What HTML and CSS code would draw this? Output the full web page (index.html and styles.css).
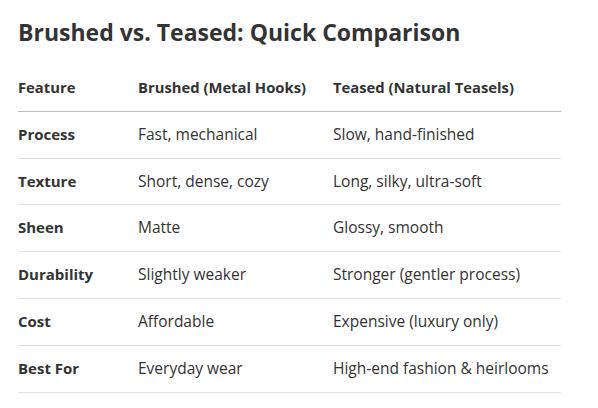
FILE: index.html
```html
<!DOCTYPE html>
<html>
<head>
<meta charset="utf-8">
<link rel="stylesheet" href="styles.css">
</head>
<body>
<div class="page">
  <h1 class="title">Brushed vs. Teased: Quick Comparison</h1>
  <table class="cmp">
    <thead>
      <tr><th class="c1">Feature</th><th class="c2">Brushed (Metal Hooks)</th><th class="c3">Teased (Natural Teasels)</th></tr>
    </thead>
    <tbody>
      <tr><td class="feat">Process</td><td>Fast, mechanical</td><td>Slow, hand-finished</td></tr>
      <tr><td class="feat">Texture</td><td>Short, dense, cozy</td><td>Long, silky, ultra-soft</td></tr>
      <tr><td class="feat">Sheen</td><td>Matte</td><td>Glossy, smooth</td></tr>
      <tr><td class="feat">Durability</td><td>Slightly weaker</td><td>Stronger (gentler process)</td></tr>
      <tr><td class="feat">Cost</td><td>Affordable</td><td>Expensive (luxury only)</td></tr>
      <tr><td class="feat">Best For</td><td>Everyday wear</td><td>High-end fashion &amp; heirlooms</td></tr>
    </tbody>
  </table>
</div>
</body>
</html>
```
FILE: styles.css
```css
html, body { margin: 0; padding: 0; background: #fff; }
body { font-family: "Open Sans", "Noto Sans", sans-serif; color: #333; }
.page { padding: 16px 18px 0 18px; }
.title { margin: 0 0 17px 0; font-size: 23px; line-height: 32px; font-weight: 700; color: #333; }
.cmp { border-collapse: collapse; width: 543px; font-size: 15.5px; }
.cmp th, .cmp td { text-align: left; padding: 12px 0; line-height: 21.8px; vertical-align: middle; }
.cmp th { font-weight: 700; font-size: 14.8px; border-bottom: 1px solid #bdbdbd; }
.cmp td { border-bottom: 1px solid #e3e3e3; font-weight: 400; }
.cmp td.feat { font-weight: 700; font-size: 15px; }
.c1 { width: 120px; }
.c2 { width: 195px; }
```
